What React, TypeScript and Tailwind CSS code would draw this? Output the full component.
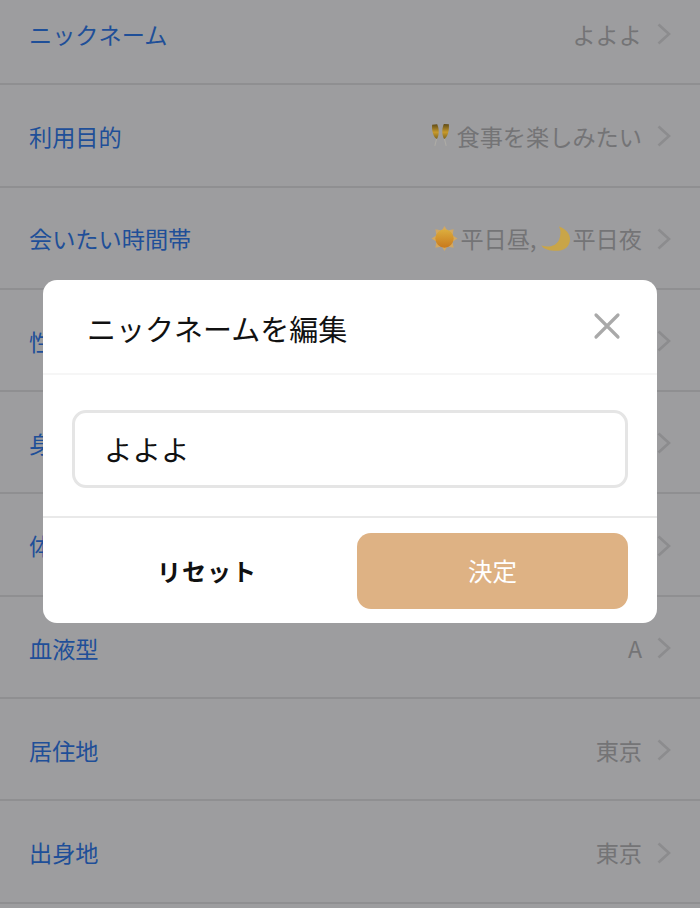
import React from "react";

const font = { fontFamily: '"Noto Sans CJK JP", "Noto Sans", sans-serif' };

function Glasses() {
  return (
    <svg width="19" height="24" viewBox="0 0 20 24" className="shrink-0 -mt-[2px]">
      <defs>
        <linearGradient id="champ" x1="0" y1="0" x2="0" y2="1">
          <stop offset="0" stopColor="#5f4a16" />
          <stop offset="0.55" stopColor="#c79a2c" />
          <stop offset="1" stopColor="#7d6420" />
        </linearGradient>
      </defs>
      <path d="M6 15.5 L4 23.5" stroke="#aeaca6" strokeWidth="1.1" fill="none" />
      <path d="M14 15.5 L16 23.5" stroke="#aeaca6" strokeWidth="1.1" fill="none" />
      <path d="M1.2 1.2 L6.5 0.6 C8.6 5 8.8 12 6.2 16.2 C2.8 15 0.6 8 1.2 1.2Z" fill="url(#champ)" />
      <path d="M18.8 0.8 L13.5 0.4 C11.4 5 11.2 12 13.8 16.2 C17.2 15 19.4 8 18.8 0.8Z" fill="url(#champ)" />
    </svg>
  );
}

function Sun() {
  return (
    <svg width="27" height="25" viewBox="0 0 27 26" className="shrink-0">
      <defs>
        <linearGradient id="sun" x1="0" y1="0" x2="0" y2="1">
          <stop offset="0" stopColor="#dcae3e" />
          <stop offset="1" stopColor="#c9791c" />
        </linearGradient>
      </defs>
      <g fill="#d2a862">
        <path d="M13.5 0 L16.5 5 L10.5 5Z" />
        <path d="M13.5 26 L16.5 21 L10.5 21Z" />
        <path d="M0 13 L5 10 L5 16Z" />
        <path d="M27 13 L22 10 L22 16Z" />
        <path d="M4 3.5 L9.5 4.5 L5 9Z" />
        <path d="M23 3.5 L17.5 4.5 L22 9Z" />
        <path d="M4 22.5 L9.5 21.5 L5 17Z" />
        <path d="M23 22.5 L17.5 21.5 L22 17Z" />
      </g>
      <circle cx="13.5" cy="13" r="9.5" fill="url(#sun)" />
    </svg>
  );
}

function Moon() {
  return (
    <svg width="29" height="25" viewBox="0 0 29 25" className="shrink-0">
      <path d="M18 0.5 C25 3 29 8 29 13 C29 20 24 24.5 17 24.8 C9 25 3 23.5 0.3 19.5 C8 22 15 20 18 14 C20 9 20 4 18 0.5Z" fill="#c9a548" />
    </svg>
  );
}

function Chevron() {
  return (
    <svg width="14" height="22" viewBox="0 0 14 22" className="shrink-0 mt-[2px]" fill="none" stroke="#8c8c8e" strokeWidth="2.6">
      <path d="M1.5 1.5 L12 11 L1.5 20.5" />
    </svg>
  );
}

const rows: { label: string; value: React.ReactNode }[] = [
  { label: "ニックネーム", value: "よよよ" },
  { label: "利用目的", value: <><Glasses /><span className="ml-[7px]">食事を楽しみたい</span></> },
  { label: "会いたい時間帯", value: <><Sun /><span className="ml-[2px]">平日昼,</span><span className="ml-[5px] mr-[2px]"><Moon /></span><span>平日夜</span></> },
  { label: "性別", value: "" },
  { label: "身長", value: "" },
  { label: "体型", value: "" },
  { label: "血液型", value: "A" },
  { label: "居住地", value: "東京" },
  { label: "出身地", value: "東京" },
];

export default function App() {
  return (
    <div className="relative w-[700px] h-[908px] overflow-hidden bg-[#9d9d9f]" style={font}>
      <div className="-mt-[17px] flex flex-col">
        {rows.map((r) => (
          <div key={r.label} className="h-[102.3px] shrink-0 flex items-center justify-between pl-[29px] pr-[29px] border-b-2 border-[#8f8f91]">
            <span className="text-[23.2px] text-[#1f4f98] mt-[2px]">{r.label}</span>
            <div className="flex items-center gap-[15px]">
              <span className="flex items-center text-[23.2px] text-[#747476] mt-[2px]">{r.value}</span>
              <Chevron />
            </div>
          </div>
        ))}
      </div>

      <div className="absolute inset-0 flex justify-center pt-[280px]">
        <div className="w-[614px] h-[343px] bg-white rounded-[14px] flex flex-col">
          <div className="h-[95px] shrink-0 flex items-center justify-between pl-[44px] pr-[36px] border-b-2 border-[#f6f6f6]">
            <span className="text-[29px] text-[#111] leading-none mt-[3px]">ニックネームを編集</span>
            <svg width="28" height="28" viewBox="0 0 28 28" className="mb-[1px]" stroke="#a9a9a9" strokeWidth="3.2" strokeLinecap="round">
              <path d="M3 3 L25 25 M25 3 L3 25" />
            </svg>
          </div>
          <div className="h-[143px] shrink-0 px-[29px] pt-[35px] border-b-2 border-[#e9e9e9]">
            <div className="h-[78px] border-[3px] border-[#e5e5e5] rounded-[14px] flex items-center pl-[29px] text-[28.5px] text-[#111]">
              よよよ
            </div>
          </div>
          <div className="flex-1 flex items-start pl-[29px] pr-[29px] pt-[15px]">
            <div className="w-[270px] mr-[15px] h-[76px] flex items-center justify-center text-[24px] font-bold text-[#111] tracking-[1px]">
              リセット
            </div>
            <div className="flex-1 h-[76px] rounded-[14px] bg-[#deb284] flex items-center justify-center text-[24.5px] text-white">
              決定
            </div>
          </div>
        </div>
      </div>
    </div>
  );
}
